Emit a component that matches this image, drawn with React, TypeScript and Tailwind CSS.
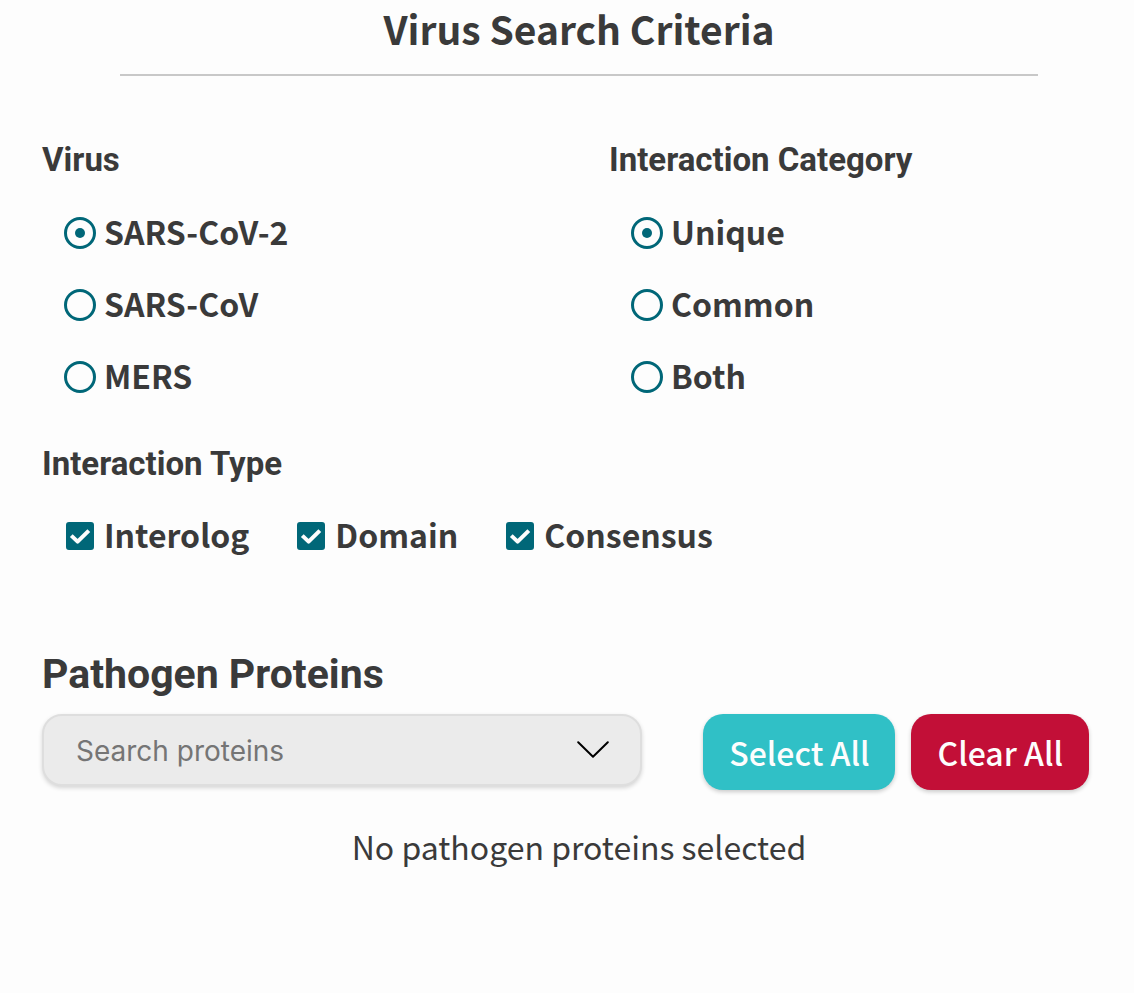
import { useState } from "react";

const viruses = ["SARS-CoV-2", "SARS-CoV", "MERS"];
const categories = ["Unique", "Common", "Both"];
const interactionTypes = ["Interolog", "Domain", "Consensus"];

function RadioGroup({ title, name, options }: { title: string; name: string; options: string[] }) {
  const [selected, setSelected] = useState(options[0]);
  return (
    <fieldset className="min-w-0 pl-[42px]">
      <legend className="font-['Roboto',sans-serif] text-[33px] leading-10 font-bold">{title}</legend>
      <div className="mt-[17px] flex flex-col pl-[22px]">
        {options.map((option) => (
          <label key={option} className="flex h-[72px] items-center gap-2 text-[32px] leading-10 font-bold">
            <input
              type="radio"
              name={name}
              value={option}
              checked={selected === option}
              onChange={() => setSelected(option)}
              className="grid size-8 shrink-0 appearance-none place-items-center rounded-full border-3 border-[#006778] before:size-[10px] before:rounded-full before:content-[''] checked:before:bg-[#006778]"
            />
            <span className="pb-1">{option}</span>
          </label>
        ))}
      </div>
    </fieldset>
  );
}

function TypeCheckbox({ label }: { label: string }) {
  return (
    <label className="flex items-center gap-[10px] text-[32px] leading-10 font-bold">
      <span className="grid size-7 shrink-0 place-items-center">
        <input
          type="checkbox"
          defaultChecked
          className="peer col-start-1 row-start-1 size-7 appearance-none rounded-[3px] border-2 border-[#006778] checked:bg-[#006778]"
        />
        <svg
          viewBox="0 0 28 28"
          className="pointer-events-none invisible col-start-1 row-start-1 size-7 peer-checked:visible"
          fill="none"
          stroke="#fdfdfd"
          strokeWidth="4"
          strokeLinejoin="round"
          aria-hidden="true"
        >
          <path d="M5.3 13.6 L11.6 19.6 L22.8 8.6" />
        </svg>
      </span>
      <span className="pb-1">{label}</span>
    </label>
  );
}

export default function App() {
  return (
    <main className="min-h-screen bg-[#fdfdfd] font-['Noto_Sans_CJK_SC',sans-serif] text-[#3a3a3a]">
      <header className="flex flex-col items-center pr-[18px] pl-[42px]">
        <h1 className="text-[39px] leading-[56px] font-bold">Virus Search Criteria</h1>
        <hr className="mt-[18px] w-[918px] max-w-full border-t-2 border-[#c8c8c8]" />
      </header>

      <div className="mt-16 grid grid-cols-2">
        <RadioGroup title="Virus" name="virus" options={viruses} />
        <RadioGroup title="Interaction Category" name="category" options={categories} />
      </div>

      <fieldset className="mt-[31px] pl-[42px]">
        <legend className="font-['Roboto',sans-serif] text-[33px] leading-10 font-bold">Interaction Type</legend>
        <div className="mt-[30px] flex flex-wrap gap-x-12 pl-6">
          {interactionTypes.map((type) => (
            <TypeCheckbox key={type} label={type} />
          ))}
        </div>
      </fieldset>

      <section className="mt-[92px] pr-[18px] pl-[42px]">
        <h2 className="font-['Roboto',sans-serif] text-[41px] leading-12 font-bold">Pathogen Proteins</h2>
        <div className="mt-4 flex items-start pr-[27px]">
          <div className="flex h-[72px] min-w-0 flex-1 items-center rounded-[20px] border-2 border-[#dedede] bg-[#ebebeb] pr-[31px] pl-8 shadow-[0_2px_4px_rgba(0,0,0,0.16)]">
            <input
              type="text"
              aria-label="Search proteins"
              placeholder="Search proteins"
              className="min-w-0 flex-1 bg-transparent pt-0.5 font-['Inter',sans-serif] text-[28px] leading-8 outline-none placeholder:text-[#757575]"
            />
            <button type="button" aria-label="Show proteins" className="shrink-0">
              <svg viewBox="0 0 32 18" className="h-[18px] w-8" fill="none" stroke="#000" strokeWidth="2" strokeLinecap="round" strokeLinejoin="round" aria-hidden="true">
                <path d="M1.2 1.2 L16 15.8 L30.8 1.2" />
              </svg>
            </button>
          </div>
          <div className="ml-[61px] flex shrink-0 gap-4 text-[32px] leading-10 font-medium text-[#fdfdfd]">
            <button type="button" className="h-[76px] rounded-[20px] bg-[#30c0c6] px-[26px] shadow-[0_2px_4px_rgba(0,0,0,0.2)]">
              Select All
            </button>
            <button type="button" className="h-[76px] rounded-[20px] bg-[#c20f37] px-[26px] shadow-[0_2px_4px_rgba(0,0,0,0.2)]">
              Clear All
            </button>
          </div>
        </div>
        <p className="mt-9 text-center text-[32px] leading-10">No pathogen proteins selected</p>
      </section>
    </main>
  );
}
